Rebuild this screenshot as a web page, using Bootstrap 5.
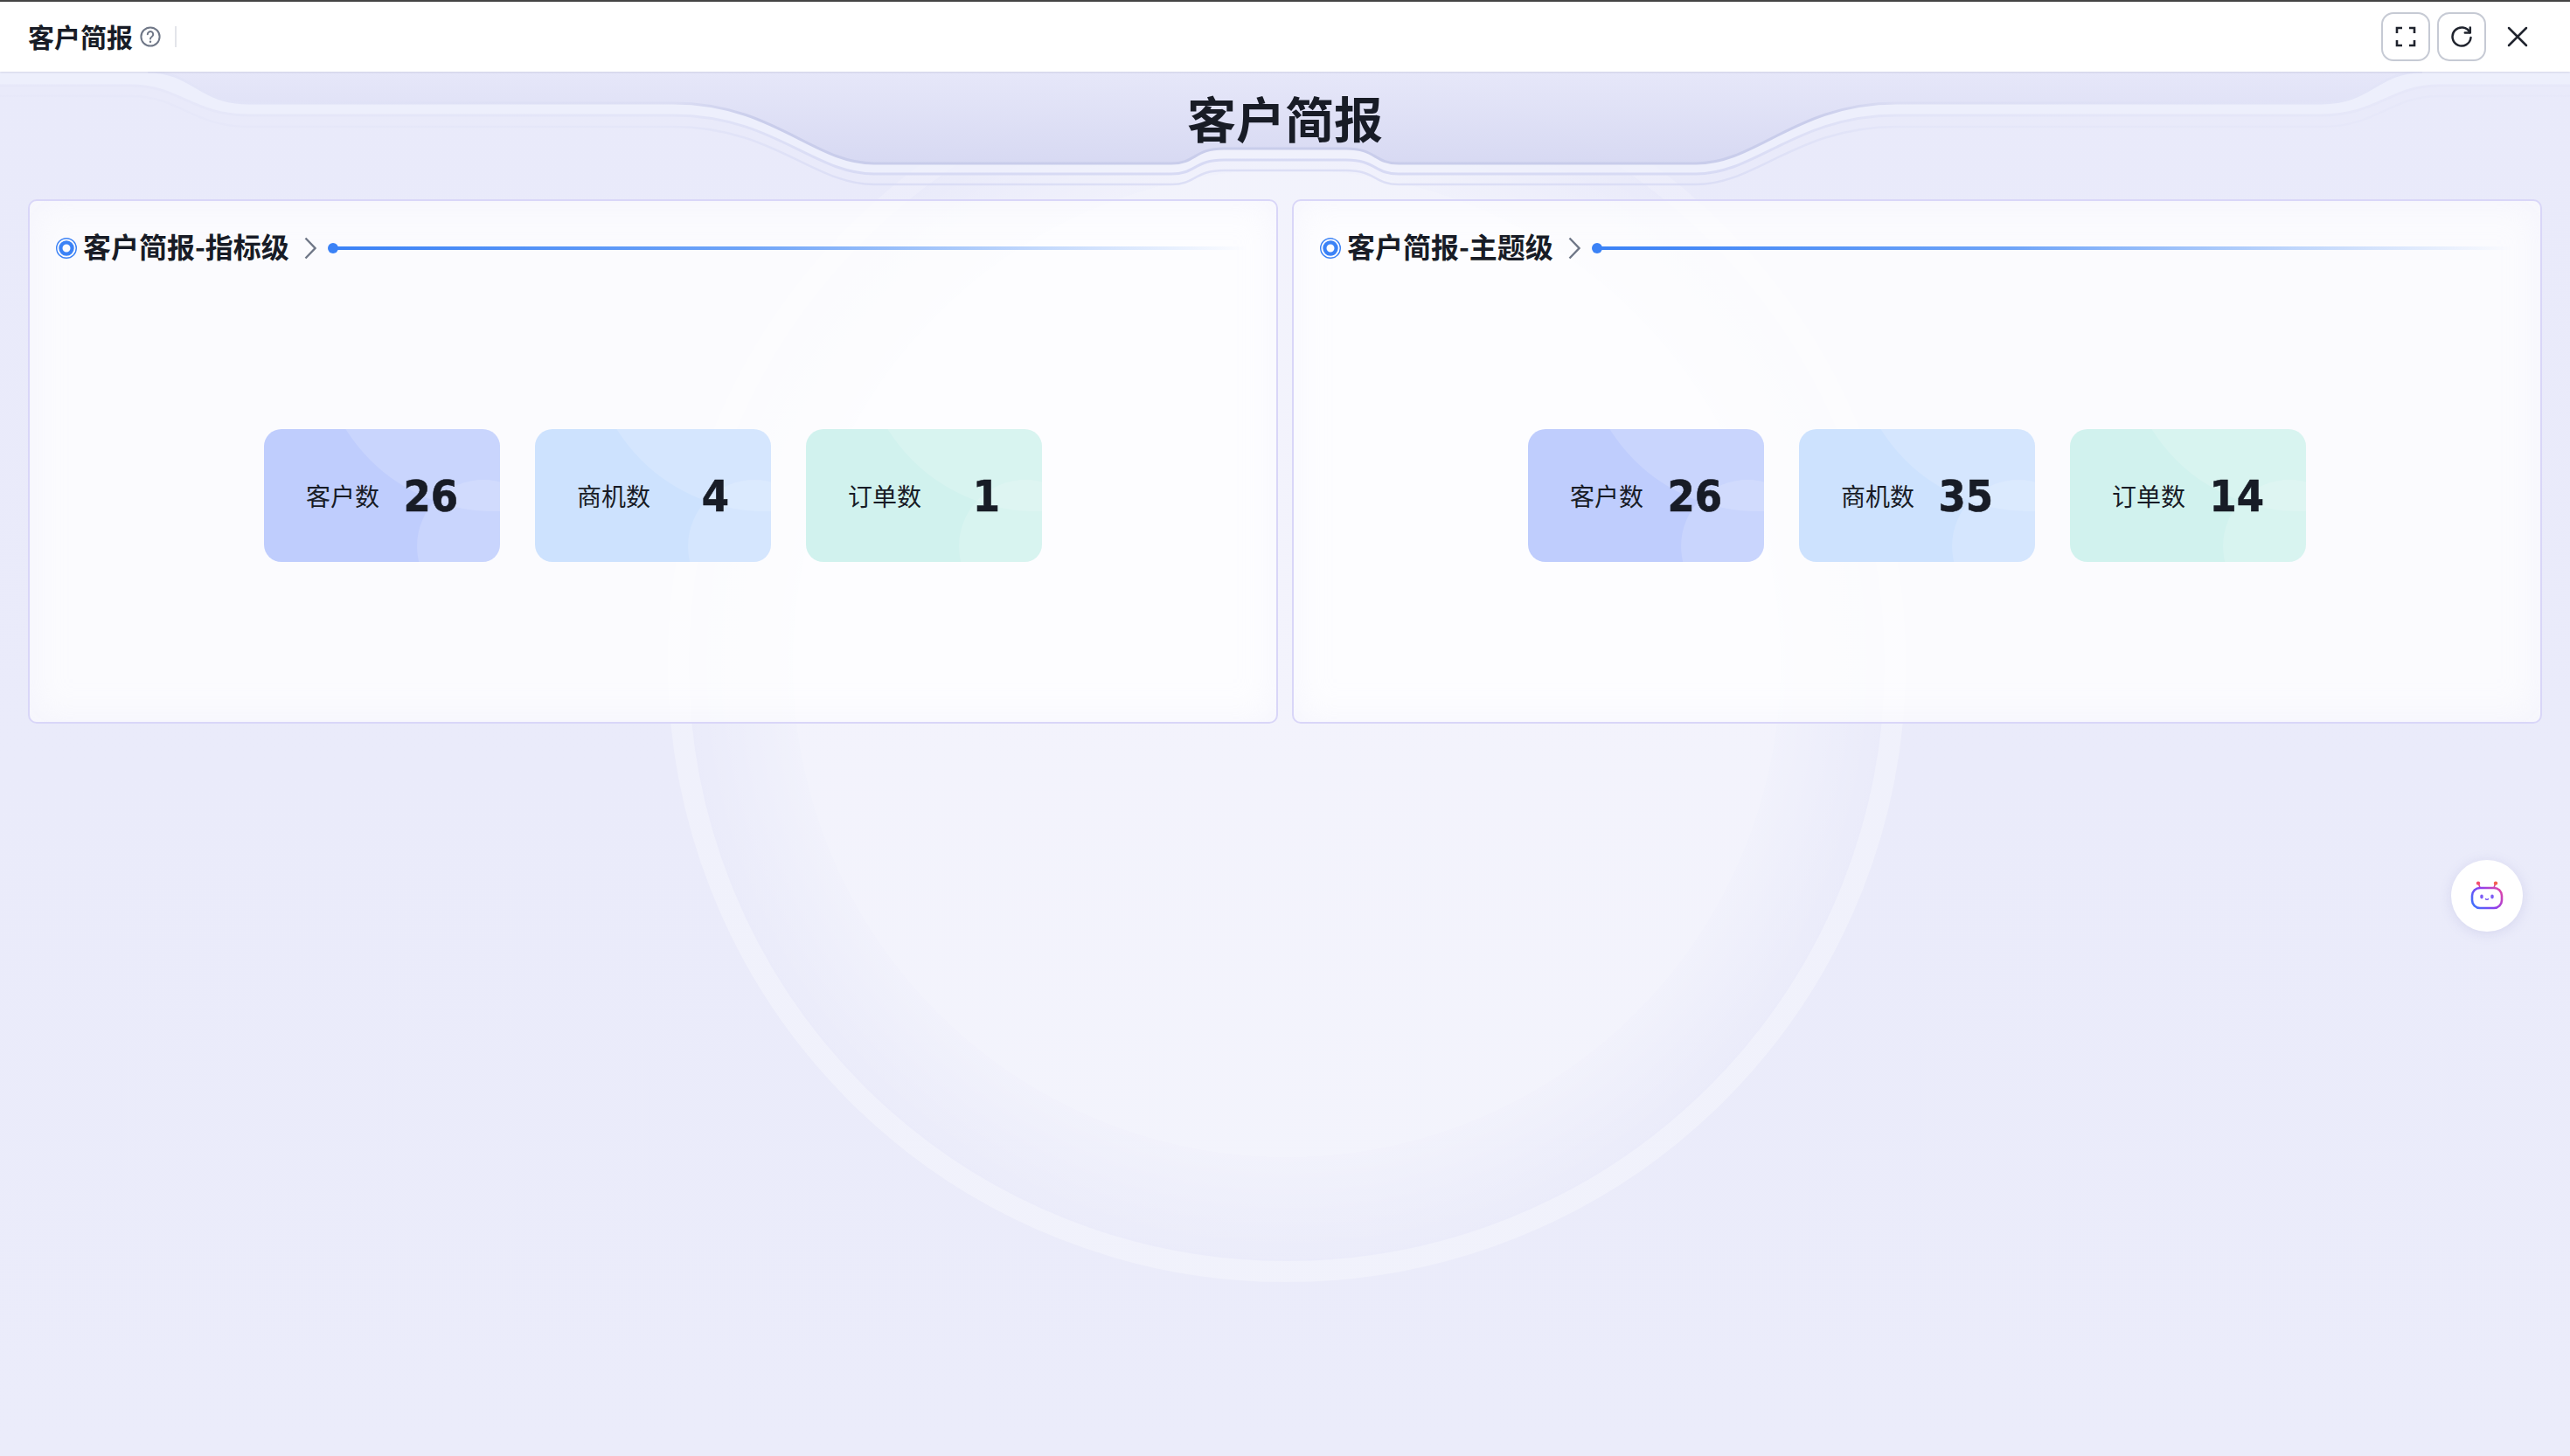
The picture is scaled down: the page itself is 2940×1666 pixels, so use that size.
<!DOCTYPE html>
<html lang="zh-CN">
<head>
  <meta charset="UTF-8">
  <meta name="viewport" content="width=device-width, initial-scale=1.0">
  <title>客户简报</title>
  <link rel="stylesheet" href="https://cdn.jsdelivr.net/npm/bootstrap@5.3.0/dist/css/bootstrap.min.css">
  <style>
    html, body { height: 100%; }
    body { margin: 0; background: #ebecfa; color: #181c26; font-family: "Noto Sans CJK SC", "Noto Sans", sans-serif; overflow: hidden; }
    .top-bar { height: 82px; background: #fff; border-top: 2px solid #444; padding: 0 32px; box-shadow: 0 1px 2px rgba(60,60,100,.14); position: relative; z-index: 2; }
    .top-title { font-size: 30px; font-weight: 700; line-height: 1; padding-bottom: 2px; }
    .top-sep { width: 2px; height: 24px; background: #e3e5ea; margin-left: 16px; }
    .tool-btn { width: 56px; height: 56px; border: 2px solid #c6cad4; border-radius: 14px; background: #fff; padding: 0; }
    .tool-x { width: 56px; height: 56px; border: 0; background: none; padding: 0; }
    .stage { position: relative; height: calc(100% - 82px); padding: 0 32px; background: linear-gradient(180deg, #e9eafa 0%, #ebecfa 100%); }
    .stage-bg { position: absolute; left: 0; top: 0; width: 2940px; height: 1584px; }
    .big-title { position: relative; height: 146px; margin: 0; text-align: center; font-size: 56px; font-weight: 700; line-height: 104px; }
    .panels { position: relative; gap: 16px; }
    .panel-box { width: 1430px; height: 600px; border: 2px solid #d9d6f8; border-radius: 10px; background: rgba(255,255,255,.8); box-shadow: inset 0 0 40px rgba(232,232,250,.35); }
    .panel-head { height: 108px; padding: 0 32px 0 30px; }
    .panel-name { font-size: 32px; font-weight: 700; margin: 0 17px 0 7px; line-height: 1; padding-bottom: 6px; }
    .head-line { height: 4px; background: linear-gradient(90deg, #3b82f6 0%, #6ea4f8 45%, rgba(110,164,248,0) 100%); border-radius: 2px; margin-left: 19px; position: relative; }
    .head-line::before { content: ""; position: absolute; left: -6px; top: -4px; width: 12px; height: 12px; border-radius: 50%; background: #3b82f6; }
    .stat-row { margin-top: 153px; gap: 40px; }
    .stat-tile { position: relative; overflow: hidden; width: 270px; height: 152px; border-radius: 20px; padding: 0 48px; }
    .stat-tile::before, .stat-tile::after { content: ""; position: absolute; border-radius: 50%; background: rgba(255,255,255,.16); }
    .stat-tile::before { left: 63px; top: -306px; width: 400px; height: 400px; }
    .stat-tile::after { left: 175px; top: 58px; width: 152px; height: 152px; }
    .tile-blue { background: #bfcdfd; }
    .tile-sky { background: #cde2fe; }
    .tile-mint { background: #d1f2ee; }
    .stat-label, .stat-value { position: relative; z-index: 1; }
    .stat-label { font-size: 28px; line-height: 1; }
    .stat-value { font-family: "DejaVu Sans Condensed", "DejaVu Sans", sans-serif; font-stretch: condensed; font-weight: 700; font-size: 50px; line-height: 1; padding-top: 2px; -webkit-text-stroke: .6px #181c26; }
    .bot-btn { position: absolute; left: 2804px; top: 902px; width: 82px; height: 82px; border-radius: 50%; background: #fff; box-shadow: 0 2px 14px rgba(120,120,190,.18); z-index: 3; }
  </style>
</head>
<body>
  <header class="top-bar d-flex align-items-center">
    <span class="top-title">客户简报</span>
    <svg class="ms-2" width="24" height="24" viewBox="0 0 24 24" fill="none" stroke="#6f7787" stroke-width="2" stroke-linecap="round"><circle cx="12" cy="12" r="10.6"/><path d="M8.8 9.3a3.2 3.2 0 1 1 4.9 2.7c-1.1.7-1.7 1.3-1.7 2.5"/><path d="M12 17.6v.1" stroke-width="2.4"/></svg>
    <span class="top-sep"></span>
    <div class="ms-auto d-flex align-items-center gap-2">
      <button class="tool-btn d-flex align-items-center justify-content-center" type="button">
        <svg width="24" height="24" viewBox="0 0 24 24" fill="none" stroke="#20242e" stroke-width="2.6"><path d="M8 2H2v6M16 2h6v6M8 22H2v-6M16 22h6v-6"/></svg>
      </button>
      <button class="tool-btn d-flex align-items-center justify-content-center" type="button">
        <svg width="26" height="26" viewBox="0 0 26 26" fill="none" stroke="#20242e" stroke-width="2.5" stroke-linecap="round" stroke-linejoin="round"><path d="M22.4 8.2A10.5 10.5 0 1 0 23.5 14"/><path d="M22.8 2.5v6h-6"/></svg>
      </button>
      <button class="tool-x d-flex align-items-center justify-content-center" type="button">
        <svg width="24" height="24" viewBox="0 0 24 24" fill="none" stroke="#20242e" stroke-width="2.5" stroke-linecap="round"><path d="M2 2l20 20M22 2L2 22"/></svg>
      </button>
    </div>
  </header>

  <main class="stage">
    <!-- decoration behind the page: big circle and banner curves -->
    <svg class="stage-bg" viewBox="0 82 2940 1584" fill="none">
      <defs>
        <linearGradient id="bannerFill" x1="0" y1="82" x2="0" y2="187" gradientUnits="userSpaceOnUse">
          <stop offset="0" stop-color="#e6e7f9"/>
          <stop offset="1" stop-color="#d6d8f2"/>
        </linearGradient>
        <linearGradient id="edgeLine" x1="160" y1="0" x2="2780" y2="0" gradientUnits="userSpaceOnUse">
          <stop offset="0" stop-color="#e3e5f8"/>
          <stop offset=".233" stop-color="#dcdef4"/>
          <stop offset=".27" stop-color="#c9cdeb"/>
          <stop offset=".73" stop-color="#c9cdeb"/>
          <stop offset=".767" stop-color="#dcdef4"/>
          <stop offset="1" stop-color="#e3e5f8"/>
        </linearGradient>
        <linearGradient id="softLine" x1="0" y1="0" x2="2940" y2="0" gradientUnits="userSpaceOnUse">
          <stop offset="0" stop-color="#e7e8f9"/>
          <stop offset=".26" stop-color="#e3e5f8"/>
          <stop offset=".34" stop-color="#d7daf4"/>
          <stop offset=".66" stop-color="#d7daf4"/>
          <stop offset=".74" stop-color="#e3e5f8"/>
          <stop offset="1" stop-color="#e7e8f9"/>
        </linearGradient>
        <linearGradient id="ringFade" x1="0" y1="51" x2="0" y2="700" gradientUnits="userSpaceOnUse">
          <stop offset="0" stop-color="#fff" stop-opacity=".1"/>
          <stop offset=".5" stop-color="#fff" stop-opacity=".24"/>
          <stop offset="1" stop-color="#fff" stop-opacity=".3"/>
        </linearGradient>
        <radialGradient id="ringFill" gradientUnits="userSpaceOnUse" cx="1472" cy="759" r="684">
          <stop offset=".826" stop-color="#fff" stop-opacity=".42"/>
          <stop offset=".826" stop-color="#fff" stop-opacity=".34"/>
          <stop offset="1" stop-color="#fff" stop-opacity=".02"/>
        </radialGradient>
      </defs>
      <circle cx="1472" cy="759" r="696" stroke="url(#ringFade)" stroke-width="24"/>
      <circle cx="1472" cy="759" r="684" fill="url(#ringFill)"/>
      <path d="M169 82C222 82 226 118 285 118H770C885 118 930 187 1000 187H1340C1368 187 1366 170 1400 170H1540C1574 170 1572 187 1600 187H1940C2010 187 2055 118 2170 118H2655C2714 118 2718 82 2771 82Z" fill="url(#bannerFill)" fill-opacity=".94"/>
      <path d="M0 98H150C205 98 220 132 285 132H770C885 132 930 199 1000 199H1340C1368 199 1366 183 1400 183H1540C1574 183 1572 199 1600 199H1940C2010 199 2055 132 2170 132H2655C2720 132 2735 98 2790 98H2940V82H2771C2718 82 2714 118 2655 118H2170C2055 118 2010 187 1940 187H1600C1572 187 1574 170 1540 170H1400C1366 170 1368 187 1340 187H1000C930 187 885 118 770 118H285C226 118 222 82 169 82H0Z" fill="#f1f2fd" opacity=".55"/>
      <path d="M169 82C222 82 226 118 285 118H770C885 118 930 187 1000 187H1340C1368 187 1366 170 1400 170H1540C1574 170 1572 187 1600 187H1940C2010 187 2055 118 2170 118H2655C2714 118 2718 82 2771 82" stroke="url(#edgeLine)" stroke-width="3"/>
      <path d="M0 98H150C205 98 220 132 285 132H770C885 132 930 199 1000 199H1340C1368 199 1366 183 1400 183H1540C1574 183 1572 199 1600 199H1940C2010 199 2055 132 2170 132H2655C2720 132 2735 98 2790 98H2940" stroke="url(#softLine)" stroke-width="3"/>
      <path d="M0 110H150C205 110 220 145 285 145H770C885 145 930 211 1000 211H1340C1368 211 1366 195 1400 195H1540C1574 195 1572 211 1600 211H1940C2010 211 2055 145 2170 145H2655C2720 145 2735 110 2790 110H2940" stroke="url(#softLine)" stroke-width="2.5" opacity=".8"/>
    </svg>

    <h1 class="big-title">客户简报</h1>

    <div class="panels d-flex">
      <section class="panel-box d-flex flex-column">
        <div class="panel-head d-flex align-items-center">
          <svg width="24" height="24" viewBox="0 0 24 24" fill="none"><circle cx="12" cy="12" r="11.3" stroke="#3b82f6" stroke-width="1.4"/><circle cx="12" cy="12" r="6.6" stroke="#3b82f6" stroke-width="4.2"/></svg>
          <span class="panel-name">客户简报-指标级</span>
          <svg width="14" height="26" viewBox="0 0 14 26" fill="none" stroke="#6f7787" stroke-width="2.4"><path d="M1.5 1.5L12.5 13L1.5 24.5"/></svg>
          <div class="head-line flex-grow-1"></div>
        </div>
        <div class="stat-row d-flex justify-content-center">
          <div class="stat-tile tile-blue d-flex align-items-center justify-content-between"><span class="stat-label">客户数</span><span class="stat-value">26</span></div>
          <div class="stat-tile tile-sky d-flex align-items-center justify-content-between"><span class="stat-label">商机数</span><span class="stat-value">4</span></div>
          <div class="stat-tile tile-mint d-flex align-items-center justify-content-between"><span class="stat-label">订单数</span><span class="stat-value">1</span></div>
        </div>
      </section>

      <section class="panel-box d-flex flex-column">
        <div class="panel-head d-flex align-items-center">
          <svg width="24" height="24" viewBox="0 0 24 24" fill="none"><circle cx="12" cy="12" r="11.3" stroke="#3b82f6" stroke-width="1.4"/><circle cx="12" cy="12" r="6.6" stroke="#3b82f6" stroke-width="4.2"/></svg>
          <span class="panel-name">客户简报-主题级</span>
          <svg width="14" height="26" viewBox="0 0 14 26" fill="none" stroke="#6f7787" stroke-width="2.4"><path d="M1.5 1.5L12.5 13L1.5 24.5"/></svg>
          <div class="head-line flex-grow-1"></div>
        </div>
        <div class="stat-row d-flex justify-content-center">
          <div class="stat-tile tile-blue d-flex align-items-center justify-content-between"><span class="stat-label">客户数</span><span class="stat-value">26</span></div>
          <div class="stat-tile tile-sky d-flex align-items-center justify-content-between"><span class="stat-label">商机数</span><span class="stat-value">35</span></div>
          <div class="stat-tile tile-mint d-flex align-items-center justify-content-between"><span class="stat-label">订单数</span><span class="stat-value">14</span></div>
        </div>
      </section>
    </div>

    <div class="bot-btn d-flex align-items-center justify-content-center">
      <svg width="40" height="34" viewBox="0 0 40 34" fill="none">
        <defs>
          <linearGradient id="botStroke" x1="2" y1="32" x2="38" y2="6" gradientUnits="userSpaceOnUse">
            <stop offset="0" stop-color="#2f7bff"/>
            <stop offset=".5" stop-color="#8a3ff0"/>
            <stop offset="1" stop-color="#f0479a"/>
          </linearGradient>
        </defs>
        <path d="M12 8L10.5 3M28 8L29.5 3" stroke="#d8459b" stroke-width="1.6"/>
        <circle cx="10" cy="2.6" r="2.2" fill="#f4506e"/>
        <circle cx="30" cy="2.6" r="2.2" fill="#f4604e"/>
        <rect x="3" y="8" width="34" height="23" rx="9" stroke="url(#botStroke)" stroke-width="2.6"/>
        <ellipse cx="14" cy="18" rx="1.8" ry="2.4" fill="#7c5cf5"/>
        <ellipse cx="26" cy="18" rx="1.8" ry="2.4" fill="#7c5cf5"/>
        <path d="M18.5 20.5c.8 1.2 2.2 1.2 3 0" stroke="#7c5cf5" stroke-width="1.4" stroke-linecap="round"/>
      </svg>
    </div>
  </main>

  <script src="https://cdn.jsdelivr.net/npm/bootstrap@5.3.0/dist/js/bootstrap.bundle.min.js"></script>
</body>
</html>
